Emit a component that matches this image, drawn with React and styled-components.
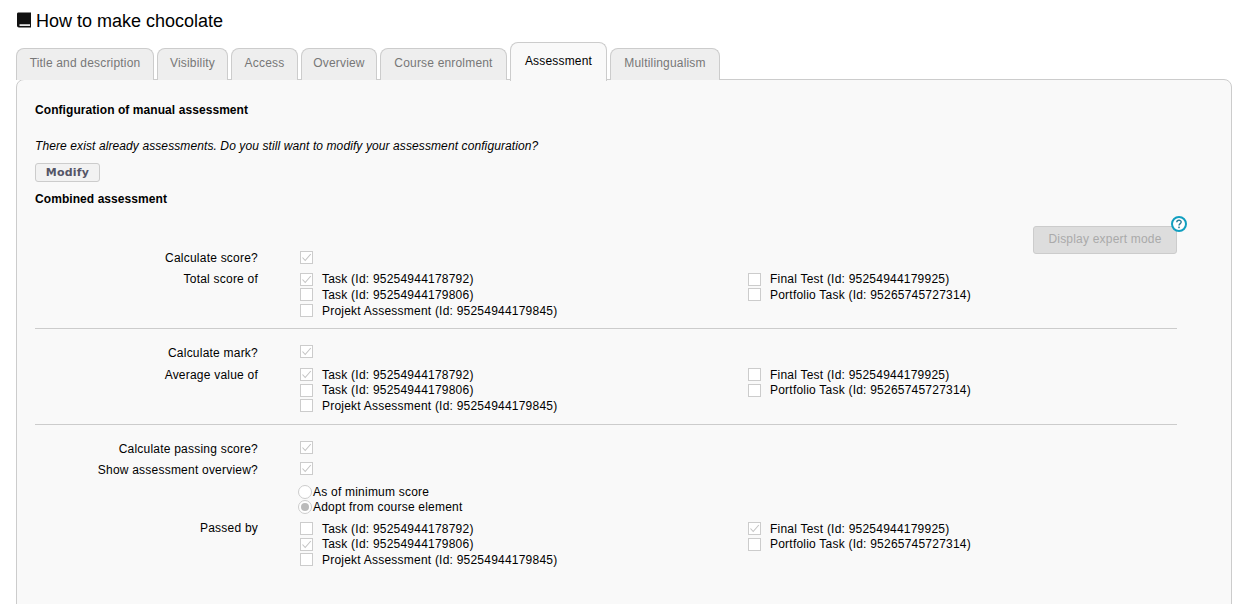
import React from "react";
import styled, { createGlobalStyle } from "styled-components";

const Global = createGlobalStyle`
  html, body { margin: 0; padding: 0; background: #fff; overflow: hidden; }
  body { font-family: "Liberation Sans", Arial, sans-serif; font-size: 12px; color: #000; }
`;
const Page = styled.div`
  width: 1238px; height: 604px; overflow: hidden; box-sizing: border-box;
  padding: 0 6px 0 16px;
`;
const Title = styled.h1`
  display: flex; align-items: center; gap: 5px; margin: 0; padding: 9px 0 0 1px; height: 33px; box-sizing: border-box;
  font-size: 18px; font-weight: 400; line-height: 22px;
  svg { width: 14px; height: 16px; margin-top: -3px; }
`;
const Tabs = styled.div`
  display: flex; align-items: flex-end; gap: 3px; height: 47px; position: relative; z-index: 1;
`;
const Tab = styled.div`
  box-sizing: border-box; width: ${p => p.$w}px; text-align: center;
  border: 1px solid #ccc; border-bottom: 0;
  border-radius: 8px 8px 0 0; letter-spacing: 0.18px;
  background: ${p => p.$active ? "#f9f9f9" : "#eee"};
  color: ${p => p.$active ? "#000" : "#777"};
  height: ${p => p.$active ? "39px" : "32px"};
  line-height: ${p => p.$active ? "36px" : "28px"};
  margin-bottom: ${p => p.$active ? "-1px" : "0"};
  white-space: nowrap;
`;
const Panel = styled.div`
  box-sizing: border-box; height: 640px; margin-top: -1px; padding: 23px 54px 0 18px;
  border: 1px solid #ccc; border-radius: 8px 8px 0 0; background: #f9f9f9;
  letter-spacing: 0.22px;
`;
const Heading = styled.h4`
  margin: 0; font-size: 12px; font-weight: 700; line-height: 15px; letter-spacing: 0.07px;
`;
const Note = styled.p`
  margin: 21px 0 0; font-style: italic; line-height: 15px; letter-spacing: 0.1px;
`;
const Modify = styled.button`
  display: block; width: 65px; height: 19px; margin: 9px 0 10px; padding: 0;
  border: 1px solid #ccc; border-radius: 3px; background: #f2f2f2; letter-spacing: 0.2px;
  font-family: "DejaVu Sans", Verdana, sans-serif; font-size: 11px; font-weight: 700; color: #555566;
`;
const ExpertBar = styled.div`
  display: flex; justify-content: flex-end; margin-top: 19px; height: 28px;
`;
const ExpertWrap = styled.div`
  position: relative;
`;
const Expert = styled.button`
  width: 144px; height: 28px; padding: 0 0 2px; box-sizing: border-box; letter-spacing: 0.2px;
  border: 1px solid #ccc; border-radius: 3px; background: #ddd; color: #aaa;
  font-family: "Liberation Sans", Arial, sans-serif; font-size: 12px;
`;
const Help = styled.svg`
  position: absolute; right: -10px; top: -10px; width: 16px; height: 16px;
`;
const Row = styled.div`
  display: grid; grid-template-columns: 223px 1fr; column-gap: 42px;
  margin-top: ${p => p.$mt || 0}px;
`;
const Label = styled.div`
  text-align: right; line-height: 15px;
  padding-top: ${p => p.$nudge ? 1 : 0}px;
  margin-bottom: ${p => p.$nudge ? -1 : 0}px;
`;
const Boxes = styled.div`
  display: grid; grid-template-columns: 448px 1fr;
`;
const Col = styled.div`
  display: flex; flex-direction: column;
`;
const Item = styled.div`
  display: flex; align-items: ${p => p.$solo ? "flex-start" : "center"}; height: 15.6px; white-space: nowrap;
`;
const Box = styled.span`
  display: inline-flex; align-items: center; justify-content: center; flex: none;
  width: 11px; height: 11px; border: 1px solid #ccc; background: #fff;
  svg { width: 11px; height: 11px; }
`;
const ItemText = styled.span`
  margin-left: 9px;
`;
const Rule = styled.hr`
  border: 0; border-top: 1px solid #ccc; margin: ${p => p.$mt}px 0 0; height: 0;
`;
const Radio = styled.span`
  box-sizing: border-box; display: inline-flex; align-items: center; justify-content: center; flex: none;
  width: 14px; height: 14px; border: 1px solid #ccc; border-radius: 50%; background: #fff;
  margin-right: 1px;
  &::after { content: ""; width: 8px; height: 8px; border-radius: 50%; background: ${p => p.$on ? "#bbb" : "transparent"}; }
`;
const RadioRow = styled.div`
  display: flex; align-items: center; height: 15px; margin-left: -2px; white-space: nowrap;
`;

const Check = ({ on }) => (
  <Box>{on && (
    <svg viewBox="0 0 11 11"><path d="M1.5 5.5 L4.2 8.5 L9.8 2" fill="none" stroke="#c4c4c4" strokeWidth="1.1" /></svg>
  )}</Box>
);
const Entry = ({ on, children }) => (
  <Item><Check on={on} /><ItemText>{children}</ItemText></Item>
);
const Solo = () => <Item $solo><Check on /></Item>;
const T1 = "Task (Id: 95254944178792)";
const T2 = "Task (Id: 95254944179806)";
const P = "Projekt Assessment (Id: 95254944179845)";
const F = "Final Test (Id: 95254944179925)";
const PT = "Portfolio Task (Id: 95265745727314)";

const Group = ({ on = [] }) => (
  <Boxes>
    <Col>
      <Entry on={on.includes(0)}>{T1}</Entry>
      <Entry on={on.includes(1)}>{T2}</Entry>
      <Entry on={on.includes(2)}>{P}</Entry>
    </Col>
    <Col>
      <Entry on={on.includes(3)}>{F}</Entry>
      <Entry on={on.includes(4)}>{PT}</Entry>
    </Col>
  </Boxes>
);

const Book = () => (
  <svg viewBox="0 0 14 16">
    <path d="M1.5 0.5 H14 V15.5 H2 C0.8 15.5 0 14.7 0 13.5 V2 C0 1 0.5 0.5 1.5 0.5 Z" fill="#111" />
    <rect x="2.5" y="12.3" width="10.5" height="1.6" fill="#fff" />
  </svg>
);

const tabs = [
  ["Title and description", 138], ["Visibility", 71], ["Access", 67], ["Overview", 76],
  ["Course enrolment", 127], ["Assessment", 97], ["Multilingualism", 110],
];

export default function App() {
  return (
    <Page>
      <Global />
      <Title><Book />How to make chocolate</Title>
      <Tabs>
        {tabs.map(([t, w]) => <Tab key={t} $w={w} $active={t === "Assessment"}>{t}</Tab>)}
      </Tabs>
      <Panel>
        <Heading>Configuration of manual assessment</Heading>
        <Note>There exist already assessments. Do you still want to modify your assessment configuration?</Note>
        <Modify>Modify</Modify>
        <Heading>Combined assessment</Heading>
        <ExpertBar>
          <ExpertWrap>
            <Expert>Display expert mode</Expert>
            <Help viewBox="0 0 16 16">
              <circle cx="8" cy="8" r="7" fill="#fff" stroke="#119fc0" strokeWidth="2" />
              <path d="M5.8 6.2 C5.8 3.6 10.2 3.6 10.2 6.1 C10.2 7.6 8 7.7 8 9.6" fill="none" stroke="#2a7f99" strokeWidth="1.4" />
              <rect x="7.2" y="10.6" width="1.6" height="1.6" fill="#2a7f99" />
            </Help>
          </ExpertWrap>
        </ExpertBar>
        <Row $mt={-3}><Label>Calculate score?</Label><Solo /></Row>
        <Row $mt={5}><Label>Total score of</Label><Group on={[0]} /></Row>
        <Rule $mt={10} />
        <Row $mt={16}><Label $nudge>Calculate mark?</Label><Solo /></Row>
        <Row $mt={6}><Label $nudge>Average value of</Label><Group on={[0]} /></Row>
        <Rule $mt={10} />
        <Row $mt={16}><Label $nudge>Calculate passing score?</Label><Solo /></Row>
        <Row $mt={6}><Label $nudge>Show assessment overview?</Label><Solo /></Row>
        <Row $mt={7}><span /><Col>
          <RadioRow><Radio />As of minimum score</RadioRow>
          <RadioRow><Radio $on />Adopt from course element</RadioRow>
        </Col></Row>
        <Row $mt={6}><Label>Passed by</Label>
          <Group on={[1, 3]} />
        </Row>
      </Panel>
    </Page>
  );
}
